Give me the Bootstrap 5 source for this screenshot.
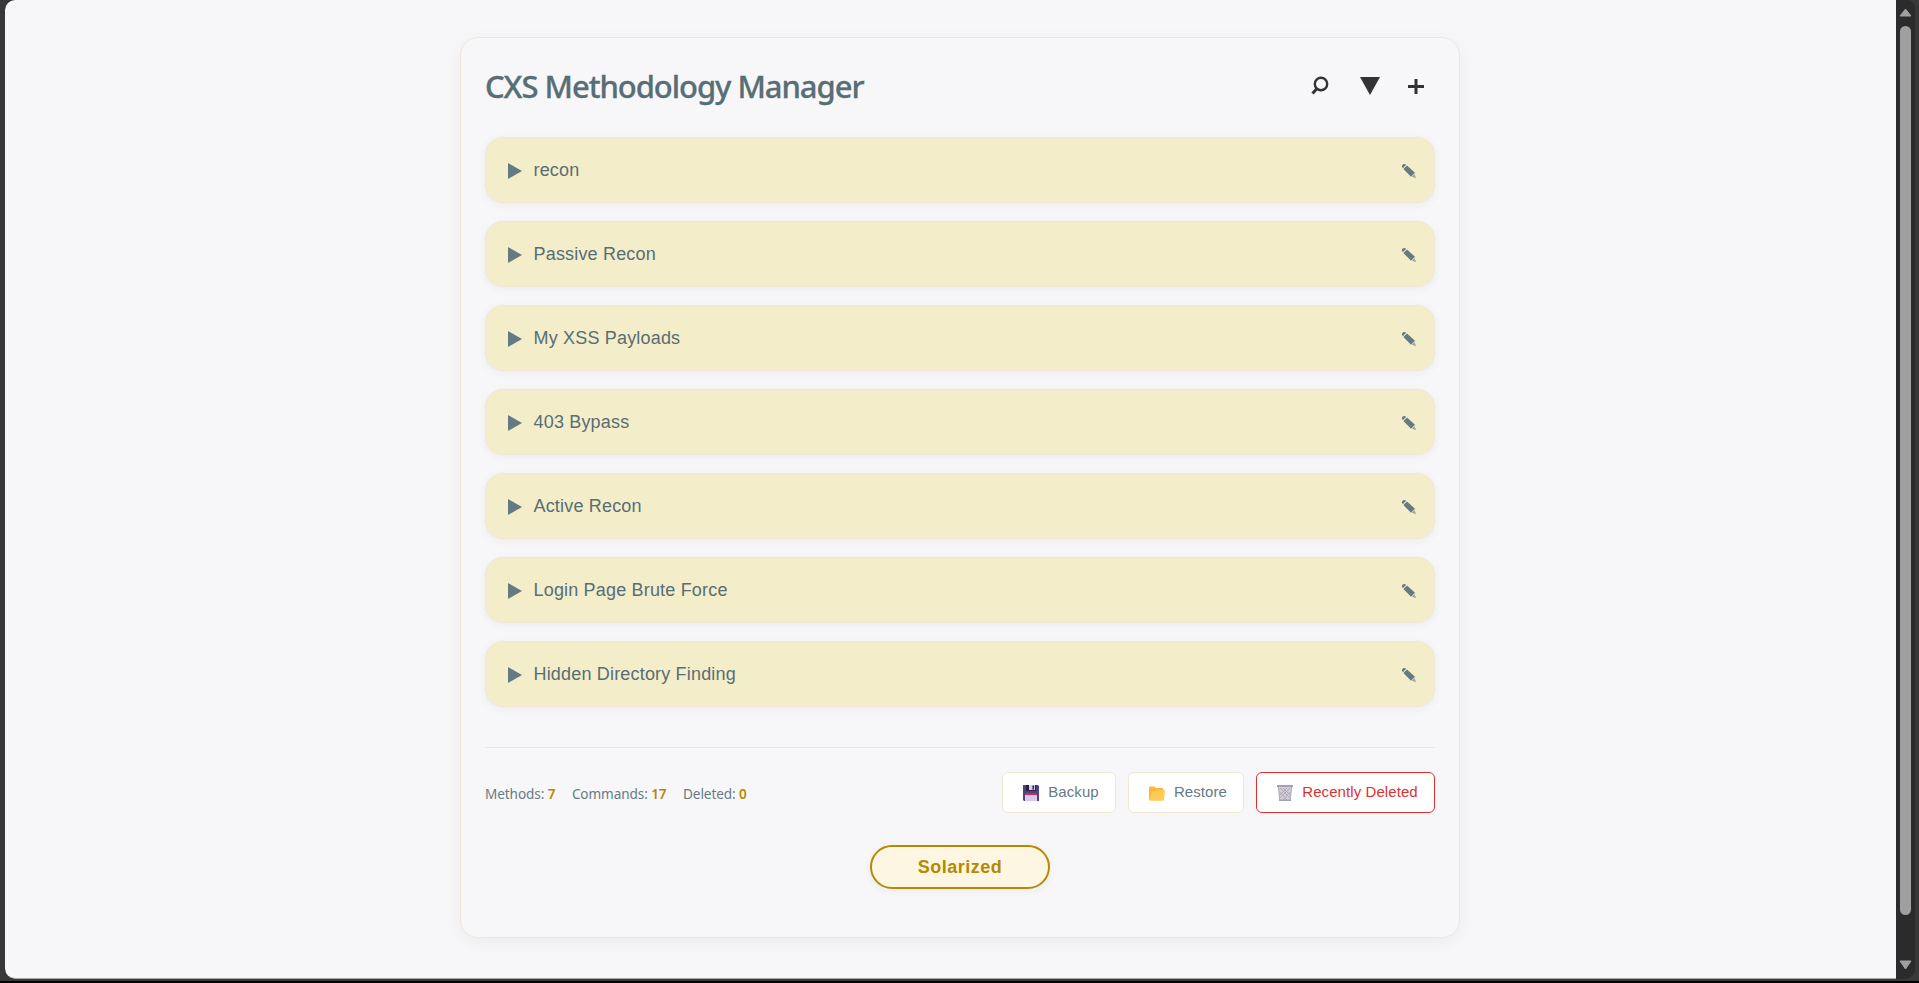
<!DOCTYPE html>
<html lang="en">
<head>
<meta charset="utf-8">
<title>CXS Methodology Manager</title>
<link href="https://cdn.jsdelivr.net/npm/bootstrap@5.3.0/dist/css/bootstrap.min.css" rel="stylesheet">
<style>
html, body { height: 100%; overflow: hidden; }
body { background: #383838; font-family: "Liberation Sans", Arial, sans-serif; color: #586e75; }
.window-frame { height: 981px; padding: 0 4px 2px 5px; background: #383838; }
.window-inner { background: #2b2b2b; border-radius: 8px 8px 10px 10px; height: 979px; overflow: hidden; }
.viewport { background: #f7f7fa; border-radius: 10px 0 0 10px; border-bottom: 1px solid #aaa; padding: 37px 0 0; }
.manager { width: 1000px; height: 901px; margin-left: 455px; padding: 0 24px; border: 1px solid #eee8d5; border-radius: 18px; background: #f7f7fa; box-shadow: 0 4px 16px rgba(0,0,0,.05); }
.heading { height: 99px; padding: 0 5px 4px 0; }
.heading h1 { font: 500 31px/40px "Noto Sans", sans-serif; letter-spacing: -1.06px; -webkit-text-stroke: .3px #586e75; color: #586e75; white-space: nowrap; }
.method { height: 66px; border: 1px solid #eee8d5; border-radius: 18px; background: #f4edca; box-shadow: 0 2px 8px rgba(0,0,0,.05); padding: 0 17.5px 0 22px; font-size: 18px; letter-spacing: .18px; }
.method-list { gap: 18px; }
.method span { margin-left: 10.5px; }
.method .edit { margin-top: 2px; }
.summary { margin-top: 40px; border-top: 1px solid #eee8d5; padding-top: 24px; }
.stats { font: 13.6px/20px "Noto Sans", sans-serif; letter-spacing: -.1px; color: #657b83; gap: 16.5px; padding-top: 2px; }
.stats b { color: #b58900; font-weight: 600; }
.actions { gap: 12px; }
.action { height: 41px; border: 1px solid #eee8d5; border-radius: 6px; background: #fff; color: #657b83; font-size: 15px; letter-spacing: .08px; padding: 0 0 0 3px; gap: 8px; }
.action-danger { border-color: #dc322f; color: #dc322f; }
.w-backup { width: 114px; } .w-restore { width: 116px; } .w-deleted { width: 179px; }
.theme-btn { width: 180px; height: 44px; margin-top: 32px; border: 2px solid #b58900; border-radius: 22px; background: #fdf6e3; color: #b58900; font-weight: 700; font-size: 18px; letter-spacing: .5px; padding: 0; box-shadow: 0 2px 8px rgba(0,0,0,.05); }
.scroll { width: 19px; padding: 8px 0 9px; }
.thumb { width: 11px; background: #9f9f9f; border-radius: 6px; height: 889px; margin-top: 9px; }
.base-line { height: 2px; background: #000; }
</style>
</head>
<body>
<svg class="d-none">
  <symbol id="pencil" viewBox="0 0 16 16"><path d="M1.200 4.500Q.5 3 1.500 1.800 2.700.4 4.500 1.200L5 2 2 5ZM2.400 6 6 2.400 14 9.800 10 13.800ZM13.700 11.200 14.800 14.800 11.200 13.700Z" fill="#657b83"/><path d="m12.300 13.400 1.400-1.500.4 1.900Z" fill="#d9dcc5"/></symbol>
</svg>
<div class="window-frame">
<div class="window-inner d-flex">
  <main class="viewport flex-grow-1">
    <section class="manager">
      <header class="heading d-flex align-items-center justify-content-between">
        <h1 class="m-0">CXS Methodology Manager</h1>
        <div class="d-flex align-items-center">
          <svg width="124" height="30" viewBox="0 0 124 30" fill="none" stroke="#333" stroke-width="2.4"><circle cx="15" cy="13" r="6.200"/><path d="m11 17.500-4.500 5" stroke-width="3"/><path d="M54 6h20L64 24Z" fill="#333" stroke="none"/><path d="M110 8v15M102 15.500h16" stroke-width="3"/></svg>
        </div>
      </header>
      <div class="method-list d-flex flex-column" id="methods"></div>
      <footer class="summary d-flex justify-content-between align-items-center">
        <div class="stats d-flex"><div>Methods: <b>7</b></div><div>Commands: <b>17</b></div><div>Deleted: <b>0</b></div></div>
        <div class="actions d-flex">
          <button class="btn action w-backup d-flex align-items-center justify-content-center"><svg width="18" height="18" viewBox="0 0 18 18"><path d="M1 1h15l1 1v15H2l-1-1Z" fill="#4d4185"/><path d="M4 1h10v6H4Z" fill="#272144"/><path d="M7 1h6v5H7Z" fill="#d8cfe8"/><path d="M10.500 1.500H12v4h-1.500Z" fill="#272144"/><path d="M3 9h12v2H3Z" fill="#e02447"/><path d="M3 11h12v6H3Z" fill="#d8c9e9"/></svg>Backup</button>
          <button class="btn action w-restore d-flex align-items-center justify-content-center"><svg width="18" height="18" viewBox="0 0 18 18"><path d="M1 3.500q0-1 1-1h4.500L8 4h6q1.500 0 1.500 1.500V16H2q-1 0-1-1Z" fill="#fbb83c"/><path d="m1.500 16 2-7q.4-1.500 2-1.500h2l1.500-1.300h7q1.300 0 1 1.300L16 15q-.3 1.700-2 1.700H2Z" fill="#ffcb55"/></svg>Restore</button>
          <button class="btn action action-danger w-deleted d-flex align-items-center justify-content-center"><svg width="18" height="18" viewBox="0 0 18 18"><path d="M2 3h14l-1.500 14h-11Z" fill="#d3ceda"/><path d="m4 4 10 10M14 4 4 14M7 4l7 7M11 4l-7 7M4 8l7 8M14 8l-7 8M2.500 3l1.200 13M15.500 3l-1.200 13" stroke="#a69faf" stroke-width=".8"/><path d="M1 1h16v2H1ZM3 15.500h12V17H3Z" fill="#a7a0b1"/></svg>Recently Deleted</button>
        </div>
      </footer>
      <div class="d-flex justify-content-center"><button class="btn theme-btn">Solarized</button></div>
    </section>
  </main>
  <aside class="scroll d-flex flex-column align-items-center">
    <svg width="13" height="9" viewBox="0 0 13 9"><path d="M6.500 1 12 8H1Z" fill="#9f9f9f" stroke="#9f9f9f" stroke-linejoin="round"/></svg>
    <div class="thumb"></div>
    <svg class="mt-auto" width="13" height="10" viewBox="0 0 13 10"><path d="M1 1h11L6.500 9Z" fill="#9f9f9f" stroke="#9f9f9f" stroke-linejoin="round"/></svg>
  </aside>
</div>
</div>
<div class="base-line"></div>
<script src="https://cdn.jsdelivr.net/npm/bootstrap@5.3.0/dist/js/bootstrap.bundle.min.js"></script>
<script>
const names = ["recon", "Passive Recon", "My XSS Payloads", "403 Bypass", "Active Recon", "Login Page Brute Force", "Hidden Directory Finding"];
document.getElementById("methods").innerHTML = names.map(n => `<div class="method d-flex align-items-center"><svg width="15" height="17" viewBox="0 0 15 17"><path d="M0 1v16l14-8Z" fill="#657b83"/></svg><span>${n}</span><svg class="edit ms-auto" width="16" height="16"><use href="#pencil"/></svg></div>`).join("");
</script>
</body>
</html>
